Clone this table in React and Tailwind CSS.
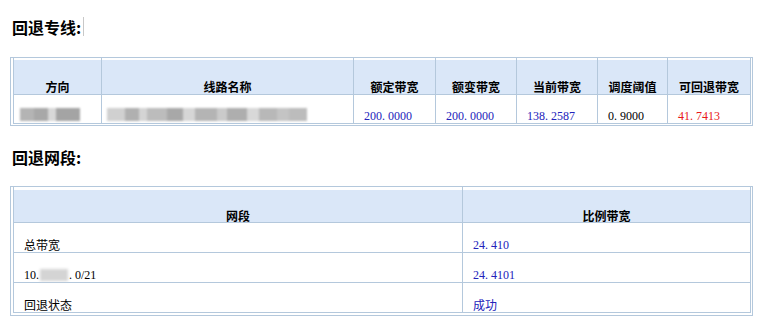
const cjk = "font-['Noto_Sans_CJK_SC',sans-serif]";
const serif = "font-['Liberation_Serif','Noto_Sans_CJK_SC',serif]";

// SimSun-style number: half-width period
function Num({ value, color }) {
  const parts = value.split(".");
  return (
    <span className={`${serif} text-[12px] leading-[12px] ${color}`}>
      {parts[0]}
      <span className="inline-block w-[6px]">.</span>
      {parts[1]}
    </span>
  );
}

function Smudge({ blocks }) {
  return (
    <div className="flex h-[13px] blur-[1px]">
      {blocks.map((b, i) => (
        <div key={i} className={`h-full ${b}`} />
      ))}
    </div>
  );
}

const cols1 = [
  { title: "方向" },
  { title: "线路名称" },
  { title: "额定带宽" },
  { title: "额变带宽" },
  { title: "当前带宽" },
  { title: "调度阈值" },
  { title: "可回退带宽" },
];

function Header1({ title, last }) {
  return (
    <div className={`border-l border-b border-[#b4c8dc] pt-[2px] ${last ? "border-r" : ""}`}>
      <div className={`h-[34px] bg-[#dae7f8] flex items-end justify-center pb-[1px] ${cjk} text-[12px] leading-[12px] font-bold text-black`}>
        {title}
      </div>
    </div>
  );
}

function Cell({ children, last, h = "h-[29px]", pl = "pl-[10px]" }) {
  return (
    <div className={`border-l border-b border-[#b4c8dc] ${h} flex items-end pb-[1px] ${pl} ${last ? "border-r" : ""}`}>
      {children}
    </div>
  );
}

function Title({ children }) {
  return (
    <div className={`ml-[12px] ${cjk} text-[16px] leading-[16px] font-bold text-black flex items-center`}>
      {children}
    </div>
  );
}

export default function App() {
  return (
    <div className="min-h-screen bg-white pt-[17px]">
      <Title>
        回退专线:
        <span className="inline-block w-[1px] h-[19px] bg-[#c8c8c8] ml-[2px]" />
      </Title>

      {/* 回退专线 table */}
      <div className="ml-[10px] mt-[21px] w-[743px] border border-[#b4c8dc] pl-[2px] pr-[1px] pb-[1px]">
        <div className="grid grid-cols-[88px_252px_82px_81px_81px_70px_84px]">
          {cols1.map((c, i) => (
            <Header1 key={c.title} title={c.title} last={i === cols1.length - 1} />
          ))}
          <Cell pl="pl-[6px]">
            <div className="pb-[1px]">
              <Smudge blocks={["w-[14px] bg-[#b4b4b4]", "w-[14px] bg-[#a8a8a8]", "w-[8px] bg-[#d8d8d8]", "w-[24px] bg-[#a4a4a4]"]} />
            </div>
          </Cell>
          <Cell pl="pl-[5px]">
            <div className="pb-[1px]">
              <Smudge
                blocks={[
                  "w-[18px] bg-[#d0d0d0]",
                  "w-[14px] bg-[#b0b0b0]",
                  "w-[8px] bg-[#d4d4d4]",
                  "w-[20px] bg-[#bcbcbc]",
                  "w-[16px] bg-[#a8a8a8]",
                  "w-[12px] bg-[#d6d6d6]",
                  "w-[22px] bg-[#b4b4b4]",
                  "w-[10px] bg-[#cacaca]",
                  "w-[20px] bg-[#aeaeae]",
                  "w-[12px] bg-[#d8d8d8]",
                  "w-[18px] bg-[#b8b8b8]",
                  "w-[12px] bg-[#c4c4c4]",
                  "w-[18px] bg-[#bcbcbc]",
                ]}
              />
            </div>
          </Cell>
          <Cell><Num value="200.0000" color="text-[#2222bb]" /></Cell>
          <Cell><Num value="200.0000" color="text-[#2222bb]" /></Cell>
          <Cell><Num value="138.2587" color="text-[#2222bb]" /></Cell>
          <Cell><Num value="0.9000" color="text-black" /></Cell>
          <Cell last><Num value="41.7413" color="text-[#e81818]" /></Cell>
        </div>
      </div>

      <div className="mt-[23px]">
        <Title>回退网段:</Title>
      </div>

      {/* 回退网段 table */}
      <div className="ml-[10px] mt-[21px] w-[743px] border border-[#b4c8dc] pl-[2px] pr-[1px] pb-[2px]">
        <div className="grid grid-cols-[449px_289px]">
          <div className="border-l border-b border-[#b4c8dc] pt-[3px]">
            <div className={`h-[32px] bg-[#dae7f8] flex items-end justify-center ${cjk} text-[12px] leading-[12px] font-bold text-black`}>
              网段
            </div>
          </div>
          <div className="border-l border-r border-b border-[#b4c8dc] pt-[3px]">
            <div className={`h-[32px] bg-[#dae7f8] flex items-end justify-center ${cjk} text-[12px] leading-[12px] font-bold text-black`}>
              比例带宽
            </div>
          </div>

          <Cell h="h-[30px]">
            <span className={`${cjk} text-[12px] leading-[12px] text-black`}>总带宽</span>
          </Cell>
          <Cell h="h-[30px]" last><Num value="24.410" color="text-[#2222bb]" /></Cell>

          <Cell h="h-[30px]">
            <span className={`${serif} text-[12px] leading-[12px] text-black flex items-end`}>
              10.
              <span className="inline-block w-[28px] h-[12px] mx-[1px] bg-[#d4d4d4] blur-[1.5px]" />
              <span className="inline-block w-[6px]">.</span>0/21
            </span>
          </Cell>
          <Cell h="h-[30px]" last><Num value="24.4101" color="text-[#2222bb]" /></Cell>

          <Cell h="h-[30px]">
            <span className={`${cjk} text-[12px] leading-[12px] text-black`}>回退状态</span>
          </Cell>
          <Cell h="h-[30px]" last>
            <span className={`${cjk} text-[12px] leading-[12px] text-[#2222bb]`}>成功</span>
          </Cell>
        </div>
      </div>
    </div>
  );
}
